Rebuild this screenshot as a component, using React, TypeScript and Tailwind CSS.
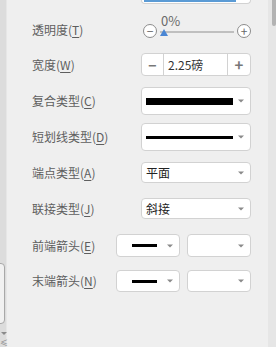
import React from 'react';

const font = { fontFamily: '"Noto Sans CJK SC", "Microsoft YaHei", sans-serif' };

function Label({ text, k }: { text: string; k: string }) {
  return (
    <span className="text-[12px] leading-none text-[#5e5e5e] whitespace-nowrap">
      {text}(<span className="underline underline-offset-2">{k}</span>)
    </span>
  );
}

function Caret() {
  return (
    <svg width="6" height="4" viewBox="0 0 6 4" className="shrink-0">
      <path d="M0 0.5h6L3 3.5z" fill="#8a8a8a" />
    </svg>
  );
}

function Dropdown({ className, children }: { className: string; children?: React.ReactNode }) {
  return (
    <div className={`flex items-center bg-white border border-[#d2d2d2] rounded-[4px] pl-[4px] pr-[6px] ${className}`}>
      <div className="flex-1 flex items-center min-w-0">{children}</div>
      <Caret />
    </div>
  );
}

function Row({ label, k, className, children }: { label: string; k: string; className: string; children: React.ReactNode }) {
  return (
    <div className={`flex items-center justify-between ${className}`}>
      <Label text={label} k={k} />
      {children}
    </div>
  );
}

export default function App() {
  return (
    <div className="flex w-[276px] h-[347px] overflow-hidden bg-[#efefef]" style={font}>
      {/* left strip */}
      <div className="w-[7px] shrink-0 bg-[#dcdcdc] border-r border-[#e6e6e6] flex flex-col">
        <div className="mt-[263px] h-[62px] w-[7px] -ml-[2px] rounded-r-[4px] border border-[#a8a8a8] bg-[#f1f1f1]" />
        <div className="mt-[8px] ml-[1px] w-0 h-0 border-l-[3px] border-r-[3px] border-t-[3px] border-l-transparent border-r-transparent border-t-[#8a8a8a]" />
        <div className="mt-[4px] text-[8px] leading-none text-[#888]">≤</div>
      </div>

      {/* panel */}
      <div className="flex-1 flex flex-col pl-[25px] pr-[17px]">
        {/* partially scrolled box */}
        <div className="self-end w-[110px] h-[4px] bg-white border border-t-0 border-[#d2d2d2] rounded-b-[4px] px-[2px]">
          <div className="h-[1.5px] w-[92px] bg-[#5b9bd5]" />
        </div>

        <Row label="透明度" k="T" className="mt-[12px] h-[28px]">
          <div className="w-[110px] h-[28px] flex items-center pl-[2px]">
            <div className="w-[14px] h-[14px] rounded-full border border-[#8c8c8c] bg-white flex items-center justify-center text-[#666] text-[12px] leading-none mt-[2px]">−</div>
            <div className="relative flex-1 h-full mx-[1px]">
              <span className="absolute left-[3px] top-[-2px] text-[13px] leading-none text-[#6a6a6a]">0%</span>
              <div className="absolute left-[2px] right-[2px] top-[15px] h-[2px] bg-[#bfbfbf]" />
              <div className="absolute left-[2px] top-[13px] w-0 h-0 border-l-[4px] border-r-[4px] border-b-[7px] border-l-transparent border-r-transparent border-b-[#4a86d4]" />
            </div>
            <div className="w-[14px] h-[14px] rounded-full border border-[#8c8c8c] bg-white flex items-center justify-center text-[#666] text-[12px] leading-none mt-[2px]">+</div>
          </div>
        </Row>

        <Row label="宽度" k="W" className="mt-[9px] h-[23px]">
          <div className="w-[110px] h-[23px] flex bg-white border border-[#d2d2d2] rounded-[4px]">
            <div className="w-[22px] flex items-center justify-center border-r border-[#d2d2d2] text-[#777] text-[14px] font-bold leading-none">−</div>
            <div className="flex-1 flex items-center pl-[4px] text-[12px] text-[#333]">2.25磅</div>
            <div className="w-[23px] flex items-center justify-center border-l border-[#d2d2d2] text-[#777] text-[15px] font-bold leading-none">+</div>
          </div>
        </Row>

        <Row label="复合类型" k="C" className="mt-[11px] h-[28px]">
          <Dropdown className="w-[110px] h-[28px]">
            <div className="w-[87px] h-[7px] bg-black" />
          </Dropdown>
        </Row>

        <Row label="短划线类型" k="D" className="mt-[8px] h-[28px]">
          <Dropdown className="w-[110px] h-[28px]">
            <div className="w-[87px] h-[3px] bg-black" />
          </Dropdown>
        </Row>

        <Row label="端点类型" k="A" className="mt-[11px] h-[21px]">
          <Dropdown className="w-[110px] h-[21px]">
            <span className="text-[12px] leading-none text-[#222]">平面</span>
          </Dropdown>
        </Row>

        <Row label="联接类型" k="J" className="mt-[15px] h-[21px]">
          <Dropdown className="w-[110px] h-[21px]">
            <span className="text-[12px] leading-none text-[#222]">斜接</span>
          </Dropdown>
        </Row>

        <Row label="前端箭头" k="E" className="mt-[15px] h-[23px]">
          <div className="flex gap-[7px]">
            <Dropdown className="w-[64px] h-[23px]">
              <div className="ml-[11px] w-[25px] h-[3px] bg-black" />
            </Dropdown>
            <Dropdown className="w-[64px] h-[23px]" />
          </div>
        </Row>

        <Row label="末端箭头" k="N" className="mt-[13px] h-[22px]">
          <div className="flex gap-[7px]">
            <Dropdown className="w-[64px] h-[22px]">
              <div className="ml-[11px] w-[25px] h-[3px] bg-black" />
            </Dropdown>
            <Dropdown className="w-[64px] h-[22px]" />
          </div>
        </Row>
      </div>

      {/* scrollbar */}
      <div className="w-[8px] shrink-0 bg-[#e6e6e6] flex justify-end">
        <div className="w-[4px] h-[26px] bg-[#b3b3b3] rounded-b-[2px]" />
      </div>
    </div>
  );
}
